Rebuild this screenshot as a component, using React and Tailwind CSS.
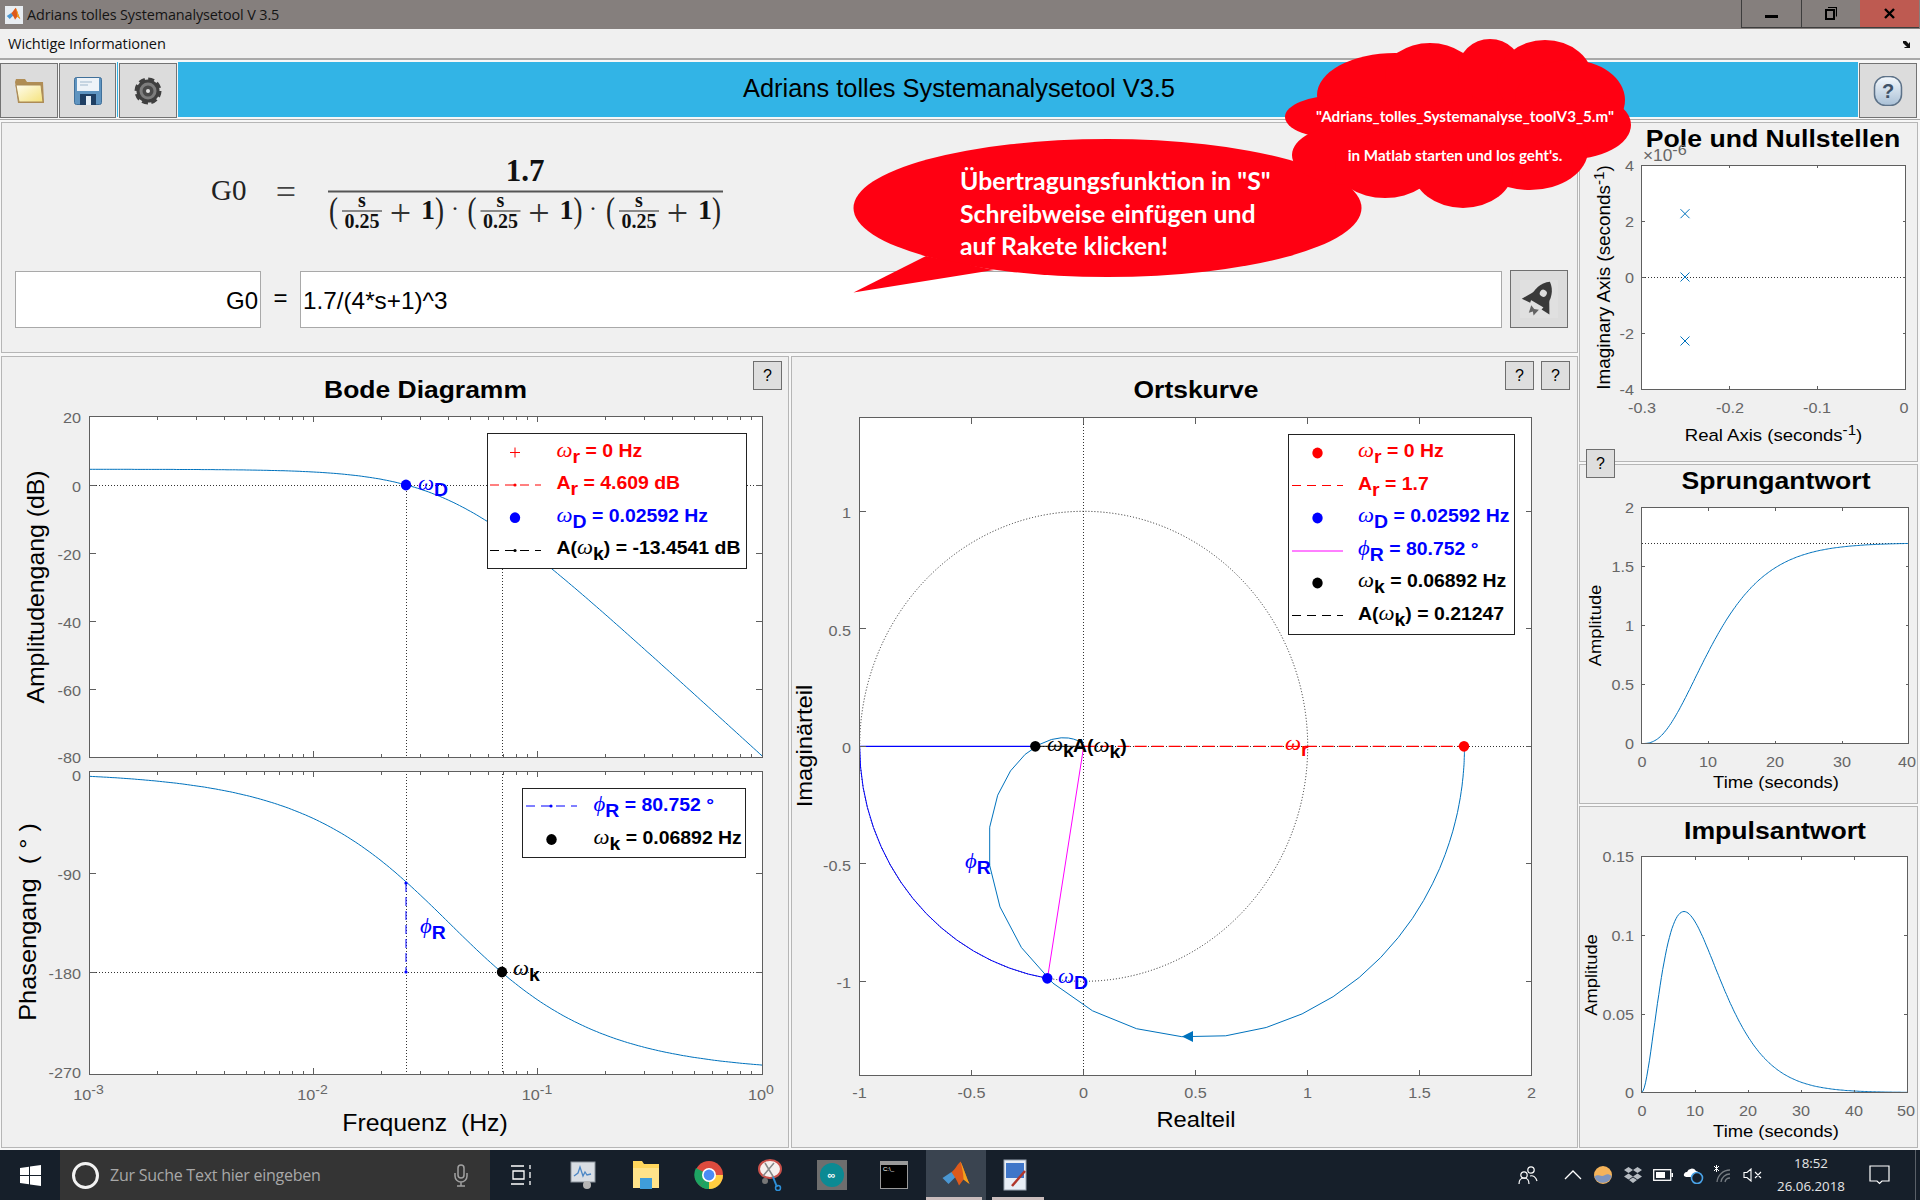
import React from 'react';

/* Adrians tolles Systemanalysetool - MATLAB GUI window on a Windows 10 desktop.
   The plots are SVGs whose viewBox equals their place on the page, so chart
   coordinates below are simply page pixels. */

const BLUE = '#0072bd';
const GREY = '#666666';
const FRAME = '#5f5f5f';

// system: G(s) = 1.7 / (4s + 1)^3
const magDb = (f) => 20 * Math.log10(1.7) - 30 * Math.log10(1 + (8 * Math.PI * f) ** 2);
const phaseDeg = (f) => (-3 * Math.atan(8 * Math.PI * f) * 180) / Math.PI;
const stepRes = (t) => 1.7 * (1 - Math.exp(-t / 4) * (1 + t / 4 + (t * t) / 32));
const impulseRes = (t) => (1.7 / 128) * t * t * Math.exp(-t / 4);

const logX = (f) => 762 + 224.1 * Math.log10(f);
const magY = (d) => 485 - d * 3.41;
const phaseY = (p) => 771.5 - p * 1.1155;
const nyX = (v) => 1083.7 + v * 224;
const nyY = (v) => 746.3 - v * 235;

const sample = (from, to, n, fx, fy) => {
  const pts = [];
  for (let i = 0; i <= n; i++) {
    const t = from + ((to - from) * i) / n;
    pts.push(`${fx(t).toFixed(1)},${fy(t).toFixed(1)}`);
  }
  return pts.join(' ');
};

const nyquistPoints = () => {
  const pts = [`${nyX(1.7)},${nyY(0)}`];
  for (let n = -46; n <= 34; n++) {
    const w = 0.562 * 1.137 ** n;
    const r = 1.7 / (1 + w * w) ** 1.5;
    const a = -3 * Math.atan(w);
    pts.push(`${nyX(r * Math.cos(a)).toFixed(1)},${nyY(r * Math.sin(a)).toFixed(1)}`);
  }
  return pts.join(' ');
};

const Txt = ({ x, y, size = 15, anchor = 'start', fill = '#000', bold, rot, sx = 1.08, children }) => (
  <text
    transform={`translate(${x} ${y})${rot ? ' rotate(-90)' : ''} scale(${sx} 1)`}
    fontSize={size}
    textAnchor={anchor}
    fill={fill}
    fontWeight={bold ? 700 : 400}
    className="font-['Liberation_Sans',sans-serif] whitespace-pre"
  >
    {children}
  </text>
);

const Greek = ({ size, children }) => (
  <tspan fontSize={size} fontWeight={400} fontStyle="italic" className="font-['Liberation_Serif',serif]">
    {children}
  </tspan>
);

// "A(w_k) = ..." style label: prefix, greek symbol, subscript, rest
const Label = ({ x, y, fill = '#000', pre, sym, sub, rest, size = 18 }) => (
  <Txt x={x} y={y} size={size} fill={fill} bold>
    {pre}
    {sym && <Greek size={size + 3}>{sym}</Greek>}
    <tspan dy="6">{sub}</tspan>
    <tspan dy="-6">{rest}</tspan>
  </Txt>
);

const Dot = ({ x, y, fill }) => <ellipse cx={x} cy={y} rx="5.2" ry="5.4" fill={fill} />;

const Dotted = ({ x1, y1, x2, y2 }) => (
  <line x1={x1} y1={y1} x2={x2} y2={y2} stroke="#333" strokeWidth="1" strokeDasharray="1 2" shapeRendering="crispEdges" />
);

const Plot = ({ l, r, t, b, xs = [], ys = [], minor = [], len = 6 }) => (
  <g stroke={FRAME} strokeWidth="1" shapeRendering="crispEdges" fill="none">
    <rect x={l} y={t} width={r - l} height={b - t} />
    {xs.map((x) => (
      <path key={x} d={`M${x} ${t}v${len}M${x} ${b}v${-len}`} />
    ))}
    {minor.map((x) => (
      <path key={x} d={`M${x} ${t}v3.5M${x} ${b}v-3.5`} />
    ))}
    {ys.map((y) => (
      <path key={y} d={`M${l} ${y}h${len}M${r} ${y}h${-len}`} />
    ))}
  </g>
);

const Face = ({ l, r, t, b }) => <rect x={l} y={t} width={r - l} height={b - t} fill="#fff" />;

const LegendBox = ({ x, y, w, h }) => (
  <rect x={x} y={y} width={w} height={h} fill="#fff" stroke="#222" strokeWidth="1" shapeRendering="crispEdges" />
);

const DashSym = ({ x, y, color, arrow }) => (
  <g>
    <line x1={x} y1={y} x2={x + 51} y2={y} stroke={color} strokeWidth="1" strokeDasharray="9 6" />
    {arrow && <circle cx={x + 25} cy={y} r="1.6" fill={color} />}
  </g>
);

const decades = [-3, -2, -1, 0].map((e) => logX(10 ** e));
const minors = [];
[-3, -2, -1].forEach((e) => {
  [2, 3, 4, 5, 6, 7, 8, 9].forEach((m) => minors.push(logX(m * 10 ** e)));
});

const BodePanel = () => (
  <svg width="786" height="790" viewBox="2 357 786 790" className="block">
    <Txt x={425.5} y={397.5} size={24.5} anchor="middle" bold>Bode Diagramm</Txt>

    <Face l={89.5} r={762} t={416} b={757} />
    <Dotted x1={89.5} y1={485} x2={762} y2={485} />
    <Dotted x1={406} y1={485} x2={406} y2={757} />
    <Dotted x1={502} y1={485} x2={502} y2={757} />
    <polyline points={sample(-3, 0, 240, (e) => logX(10 ** e), (e) => magY(magDb(10 ** e)))} fill="none" stroke={BLUE} strokeWidth="1" />
    <Plot l={89.5} r={762} t={416} b={757} xs={decades} minor={minors} ys={[485, 553, 621, 689]} />
    <Dot x={406} y={485} fill="#0000ff" />
    <Label x={418} y={490} fill="#0000ff" sym="ω" sub="D" />

    {[['20', 416], ['0', 485], ['-20', 553], ['-40', 621], ['-60', 689], ['-80', 756]].map(([v, y]) => (
      <Txt key={v} x={81} y={y + 7} anchor="end" fill={GREY}>{v}</Txt>
    ))}
    <Txt x={44} y={587} size={23} anchor="middle" rot>Amplitudengang (dB)</Txt>

    <LegendBox x={487} y={433.5} w={259} h={135} />
    <path d="M515 447.5v10M510 452.5h10" stroke="#ff0000" strokeWidth="1" />
    <Label x={556.5} y={456.5} fill="#ff0000" sym="ω" sub="r" rest=" = 0 Hz" />
    <DashSym x={490} y={485} color="#ff0000" arrow />
    <Label x={556.5} y={489} fill="#ff0000" pre="A" sub="r" rest=" = 4.609 dB" />
    <Dot x={515} y={517.7} fill="#0000ff" />
    <Label x={556.5} y={521.5} fill="#0000ff" sym="ω" sub="D" rest=" = 0.02592 Hz" />
    <DashSym x={490} y={550.5} color="#000" arrow />
    <Label x={556.5} y={554} pre="A(" sym="ω" sub="k" rest=") = -13.4541 dB" />

    <Face l={89.5} r={762} t={771} b={1074} />
    <Dotted x1={89.5} y1={972} x2={762} y2={972} />
    <Dotted x1={406} y1={771} x2={406} y2={1074} />
    <Dotted x1={502} y1={771} x2={502} y2={1074} />
    <polyline points={sample(-3, 0, 240, (e) => logX(10 ** e), (e) => phaseY(phaseDeg(10 ** e)))} fill="none" stroke={BLUE} strokeWidth="1" />
    <line x1={406} y1={883} x2={406} y2={972} stroke="#0000ff" strokeWidth="1" strokeDasharray="9 5" />
    <circle cx={406} cy={883} r="1.6" fill="#0000ff" />
    <circle cx={406} cy={972} r="1.6" fill="#0000ff" />
    <Plot l={89.5} r={762} t={771} b={1074} xs={decades} minor={minors} ys={[873, 972]} />
    <Dot x={502} y={972} fill="#000" />
    <Label x={513} y={975} sym="ω" sub="k" />
    <Label x={420} y={933} fill="#0000ff" sym="ϕ" sub="R" />

    {[['0', 774], ['-90', 873], ['-180', 972], ['-270', 1071]].map(([v, y]) => (
      <Txt key={v} x={81} y={y + 7} anchor="end" fill={GREY}>{v}</Txt>
    ))}
    {[['-3', 89.5], ['-2', 313.5], ['-1', 538], ['0', 762]].map(([e, x]) => (
      <Txt key={e} x={x - 1} y={1100} anchor="middle" fill={GREY}>
        10<tspan dy="-6" fontSize="13">{e}</tspan>
      </Txt>
    ))}
    <Txt x={36} y={922} size={23.5} anchor="middle" rot>Phasengang  ( ° )</Txt>
    <Txt x={425} y={1131} size={23} anchor="middle">Frequenz  (Hz)</Txt>

    <LegendBox x={522.5} y={788} w={223} h={69} />
    <DashSym x={526} y={806} color="#0000ff" arrow />
    <Label x={593.5} y={811} fill="#0000ff" sym="ϕ" sub="R" rest=" = 80.752 °" />
    <Dot x={551.5} y={839.5} fill="#000" />
    <Label x={593.5} y={844} sym="ω" sub="k" rest=" = 0.06892 Hz" />
  </svg>
);

const OrtsPanel = () => (
  <svg width="785" height="790" viewBox="792 357 785 790" className="block overflow-visible">
    <Txt x={1196} y={398} size={24.5} anchor="middle" bold>Ortskurve</Txt>
    <Face l={859.5} r={1531.5} t={417.5} b={1075.5} />

    <ellipse cx={1083.7} cy={746.3} rx="224" ry="235" fill="none" stroke="#222" strokeWidth="1" strokeDasharray="1 2" />
    <Dotted x1={1083.7} y1={417.5} x2={1083.7} y2={1075.5} />
    <Dotted x1={859.5} y1={746.3} x2={1531.5} y2={746.3} />

    <polyline points={nyquistPoints()} fill="none" stroke={BLUE} strokeWidth="1" />
    <polygon points="1182,1036.5 1193,1031 1193,1042" fill={BLUE} />

    <line x1={1083.7} y1={746.3} x2={1464} y2={746.3} stroke="#ff0000" strokeWidth="1.2" strokeDasharray="12 5" />
    <line x1={1035.3} y1={746.3} x2={1083.7} y2={746.3} stroke="#000" strokeWidth="1" />
    <line x1={859.7} y1={746.3} x2={1035.3} y2={746.3} stroke="#0000ff" strokeWidth="1.2" />
    <path d="M859.7 746.3A224 235 0 0 0 1047.5 978.3" fill="none" stroke="#0000ff" strokeWidth="1" />
    <line x1={1083.7} y1={746.3} x2={1047.5} y2={978.3} stroke="#ff00ff" strokeWidth="1" />

    <Plot l={859.5} r={1531.5} t={417.5} b={1075.5} xs={[971.5, 1083.5, 1195.5, 1307.5, 1419.5]} ys={[511.3, 628.8, 746.3, 863.8, 981.3]} />

    <Dot x={1464} y={746.3} fill="#ff0000" />
    <Dot x={1035.3} y={746.3} fill="#000" />
    <Dot x={1047.3} y={978.3} fill="#0000ff" />
    <Label x={1047} y={751} sym="ω" sub="k" />
    <Label x={1073} y={752} pre="A(" sym="ω" sub="k" rest=")" />
    <Label x={1285} y={750} fill="#ff0000" sym="ω" sub="r" />
    <Label x={965} y={868} fill="#0000ff" sym="ϕ" sub="R" />
    <Label x={1058} y={983} fill="#0000ff" sym="ω" sub="D" />

    {[['1', 511.3], ['0.5', 628.8], ['0', 746.3], ['-0.5', 863.8], ['-1', 981.3]].map(([v, y]) => (
      <Txt key={v} x={851} y={y + 7} anchor="end" fill={GREY}>{v}</Txt>
    ))}
    {[['-1', 859.5], ['-0.5', 971.5], ['0', 1083.5], ['0.5', 1195.5], ['1', 1307.5], ['1.5', 1419.5], ['2', 1531.5]].map(([v, x]) => (
      <Txt key={v} x={x} y={1098} anchor="middle" fill={GREY}>{v}</Txt>
    ))}
    <Txt x={1196} y={1127} size={22} anchor="middle">Realteil</Txt>
    <Txt x={812} y={746} size={22} anchor="middle" rot>Imaginärteil</Txt>

    <LegendBox x={1288.5} y={434.5} w={226} h={200} />
    <Dot x={1317.5} y={453} fill="#ff0000" />
    <Label x={1358} y={457} fill="#ff0000" sym="ω" sub="r" rest=" = 0 Hz" />
    <DashSym x={1292} y={485.5} color="#ff0000" />
    <Label x={1358} y={490} fill="#ff0000" pre="A" sub="r" rest=" = 1.7" />
    <Dot x={1317.5} y={518} fill="#0000ff" />
    <Label x={1358} y={522} fill="#0000ff" sym="ω" sub="D" rest=" = 0.02592 Hz" />
    <line x1={1292} y1={551} x2={1343} y2={551} stroke="#ff00ff" strokeWidth="1" />
    <Label x={1358} y={555} fill="#0000ff" sym="ϕ" sub="R" rest=" = 80.752 °" />
    <Dot x={1317.5} y={583} fill="#000" />
    <Label x={1358} y={587} sym="ω" sub="k" rest=" = 0.06892 Hz" />
    <DashSym x={1292} y={615.5} color="#000" />
    <Label x={1358} y={620} pre="A(" sym="ω" sub="k" rest=") = 0.21247" />
  </svg>
);

const PolePanel = () => (
  <svg width="337" height="338" viewBox="1580 123 337 338" className="block">
    <Txt x={1773} y={147} size={24.5} sx={1.087} anchor="middle" bold>Pole und Nullstellen</Txt>
    <Face l={1641.5} r={1905.5} t={165} b={389} />
    <Dotted x1={1641.5} y1={277} x2={1905.5} y2={277} />
    {[213.7, 277, 341].map((y) => (
      <path key={y} d={`M1680.5 ${y - 4.5}l9 9m0 -9l-9 9`} stroke={BLUE} strokeWidth="1" fill="none" />
    ))}
    <Plot l={1641.5} r={1905.5} t={165} b={389} xs={[1729.5, 1817.5]} ys={[221, 277, 333]} len={3} />
    <Txt x={1643} y={161} size={16} fill={GREY}>
      ×10<tspan dy="-6" fontSize="15">-6</tspan>
    </Txt>
    {[['4', 171], ['2', 227], ['0', 283], ['-2', 339], ['-4', 395]].map(([v, y]) => (
      <Txt key={v} x={1634} y={y} anchor="end" fill={GREY}>{v}</Txt>
    ))}
    {[['-0.3', 1642], ['-0.2', 1730], ['-0.1', 1817], ['0', 1904]].map(([v, x]) => (
      <Txt key={v} x={x} y={413} anchor="middle" fill={GREY}>{v}</Txt>
    ))}
    <Txt x={1773.5} y={441} size={17.2} anchor="middle">
      Real Axis (seconds<tspan dy="-6" fontSize="14">-1</tspan><tspan dy="6">)</tspan>
    </Txt>
    <Txt x={1610} y={277.5} size={17.5} anchor="middle" rot>
      Imaginary Axis (seconds<tspan dy="-6" fontSize="14">-1</tspan><tspan dy="6">)</tspan>
    </Txt>
  </svg>
);

const StepPanel = () => (
  <svg width="337" height="338" viewBox="1580 465 337 338" className="block">
    <Txt x={1776} y={489} size={24} sx={1.108} anchor="middle" bold>Sprungantwort</Txt>
    <Face l={1641.5} r={1908.5} t={507.5} b={743.5} />
    <Dotted x1={1641.5} y1={543} x2={1908.5} y2={543} />
    <polyline points={sample(0, 40, 200, (t) => 1641.5 + t * 6.675, (r) => 743.5 - stepRes(r) * 118)} fill="none" stroke={BLUE} strokeWidth="1" />
    <Plot l={1641.5} r={1908.5} t={507.5} b={743.5} xs={[1708, 1775, 1842]} ys={[566.5, 625.5, 684.5]} len={3} />
    {[['2', 513], ['1.5', 572], ['1', 631], ['0.5', 690], ['0', 749]].map(([v, y]) => (
      <Txt key={v} x={1634} y={y} anchor="end" fill={GREY}>{v}</Txt>
    ))}
    {[['0', 1642], ['10', 1708], ['20', 1775], ['30', 1842], ['40', 1907]].map(([v, x]) => (
      <Txt key={v} x={x} y={767} anchor="middle" fill={GREY}>{v}</Txt>
    ))}
    <Txt x={1776} y={788} size={17} anchor="middle">Time (seconds)</Txt>
    <Txt x={1601} y={625.5} size={17} anchor="middle" rot>Amplitude</Txt>
  </svg>
);

const ImpulsePanel = () => (
  <svg width="337" height="340" viewBox="1580 807 337 340" className="block overflow-visible">
    <Txt x={1775} y={839} size={24} sx={1.11} anchor="middle" bold>Impulsantwort</Txt>
    <Face l={1641.5} r={1907} t={856.5} b={1092.5} />
    <polyline points={sample(0, 50, 200, (t) => 1641.5 + t * 5.31, (r) => 1092.5 - impulseRes(r) * 1573)} fill="none" stroke={BLUE} strokeWidth="1" />
    <Plot l={1641.5} r={1907} t={856.5} b={1092.5} xs={[1695, 1748, 1801, 1854]} ys={[935, 1014]} len={3} />
    {[['0.15', 862], ['0.1', 941], ['0.05', 1020], ['0', 1098]].map(([v, y]) => (
      <Txt key={v} x={1634} y={y} anchor="end" fill={GREY}>{v}</Txt>
    ))}
    {[['0', 1642], ['10', 1695], ['20', 1748], ['30', 1801], ['40', 1854], ['50', 1906]].map(([v, x]) => (
      <Txt key={v} x={x} y={1116} anchor="middle" fill={GREY}>{v}</Txt>
    ))}
    <Txt x={1776} y={1137} size={17} anchor="middle">Time (seconds)</Txt>
    <Txt x={1597} y={975} size={17} anchor="middle" rot>Amplitude</Txt>
  </svg>
);

const EqTerm = ({ dx }) => (
  <g transform={`translate(${dx} 0)`} className="font-['Liberation_Serif',serif]">
    <text fontSize="36" fill="#222" transform="translate(329 222) scale(0.75 1)">(</text>
    <text x="362" y="207" fontSize="20" fontWeight="700" textAnchor="middle" fill="#111">s</text>
    <line x1="342" y1="211" x2="382" y2="211" stroke="#222" strokeWidth="1" />
    <text x="362" y="228" fontSize="20" fontWeight="700" textAnchor="middle" fill="#111">0.25</text>
    <text x="400.5" y="226" fontSize="38" textAnchor="middle" fill="#333">+</text>
    <text x="428" y="219" fontSize="28" fontWeight="700" textAnchor="middle" fill="#111">1</text>
    <text fontSize="36" fill="#222" transform="translate(435 222) scale(0.75 1)">)</text>
  </g>
);

const Equation = () => (
  <svg width="1000" height="148" viewBox="2 123 1000 148" className="block">
    <g className="font-['Liberation_Serif',serif]">
      <text x="211" y="200" fontSize="29" fill="#222">G0</text>
      <text x="286" y="204" fontSize="36" textAnchor="middle" fill="#444">=</text>
      <text x="525" y="181" fontSize="31" fontWeight="700" textAnchor="middle" fill="#111">1.7</text>
      <line x1="328" y1="191.5" x2="723" y2="191.5" stroke="#555" strokeWidth="2" />
      <text x="455" y="216" fontSize="24" textAnchor="middle" fill="#222">·</text>
      <text x="593" y="216" fontSize="24" textAnchor="middle" fill="#222">·</text>
    </g>
    <EqTerm dx={0} />
    <EqTerm dx={138.5} />
    <EqTerm dx={277} />
  </svg>
);

const RocketIcon = () => (
  <svg width="38" height="38" viewBox="-19 -19 38 38">
    <g transform="translate(1 0) rotate(30) scale(1.1)" fill="#3a3a3a">
      <path d="M0 -18C7 -13 9.5 -5 8 5L-8 5C-9.5 -5 -7 -13 0 -18Z" />
      <path d="M-8 -3L-14.5 8L-6 7.5ZM8 -3L14.5 8L6 7.5Z" />
      <circle cx="0" cy="-6" r="3.2" fill="#dcdcdc" />
      <path d="M-4 9L0 10.5L4 9L2.5 16L0 13L-2.5 16Z" opacity="0.75" />
    </g>
  </svg>
);

const FolderIcon = () => (
  <svg width="31" height="26" viewBox="0 0 31 26">
    <defs>
      <linearGradient id="folderFill" x1="0" y1="0" x2="1" y2="1">
        <stop offset="0" stopColor="#fffdf0" />
        <stop offset="1" stopColor="#f5e27a" />
      </linearGradient>
    </defs>
    <path d="M1 4l1 -3h9l2 3h16l1 21H4Z" fill="#b08d55" />
    <path d="M2 7h25l2 17H5Z" fill="url(#folderFill)" stroke="#a98a58" strokeWidth="1" />
  </svg>
);

const SaveIcon = () => (
  <svg width="28" height="28" viewBox="0 0 28 28">
    <rect x="0.5" y="0.5" width="27" height="27" rx="2" fill="#5f94c0" stroke="#40709a" />
    <rect x="3" y="1" width="22" height="13" fill="#eef3f8" />
    <path d="M6 5h12M6 8h8" stroke="#9fb7cc" strokeWidth="1" />
    <rect x="6" y="17" width="16" height="11" fill="#1f3f63" />
    <rect x="12" y="19" width="5" height="9" fill="#e6eef5" />
  </svg>
);

const GearIcon = () => (
  <svg width="28" height="28" viewBox="0 0 28 28">
    <circle cx="14" cy="14" r="11.5" fill="#3f3f3f" />
    <circle cx="14" cy="14" r="12" fill="none" stroke="#3f3f3f" strokeWidth="3" strokeDasharray="6 3.4" />
    <circle cx="14" cy="14" r="8.5" fill="#7d7d7d" />
    <circle cx="14" cy="14" r="5.5" fill="#4a4a4a" />
    <circle cx="14" cy="14" r="2" fill="#e5e5e5" />
  </svg>
);

const HelpIcon = () => (
  <svg width="30" height="30" viewBox="0 0 30 30">
    <defs>
      <linearGradient id="helpFill" x1="0" y1="0" x2="0" y2="1">
        <stop offset="0" stopColor="#f4f8fc" />
        <stop offset="1" stopColor="#a9c0d6" />
      </linearGradient>
    </defs>
    <rect x="1.5" y="0.5" width="27" height="29" rx="11" fill="url(#helpFill)" stroke="#5d7288" strokeWidth="1.5" />
    <text x="15" y="22" fontSize="20" fontWeight="700" textAnchor="middle" fill="#3f5268" className="font-['Liberation_Sans',sans-serif]">?</text>
  </svg>
);

const MatlabLogo = ({ size = 18 }) => (
  <svg width={size} height={size} viewBox="0 0 20 20">
    <path d="M1 12L7 8L10 11L5 16Z" fill="#4a97d2" />
    <path d="M7 8C9 7 10 4 13 1C15 5 17 12 19 16L15 13L12 17C11 14 9 11 7 8Z" fill="#dd5a1b" />
    <path d="M13 1C15 5 17 12 19 16L15 13C15 9 14 5 13 1Z" fill="#f0a21e" />
  </svg>
);

const ToolButton = ({ className = '', children }) => (
  <div className={`h-[55px] mt-[1px] bg-[#dcdcdc] border border-[#737373] flex items-center justify-center ${className}`}>
    {children}
  </div>
);

const SmallHelp = ({ className = '' }) => (
  <div className={`absolute w-[29px] h-[29px] bg-[#dedede] border border-[#6e6e6e] flex items-center justify-center text-[16px] text-black ${className}`}>
    ?
  </div>
);

const TitleBar = () => (
  <div className="h-[29px] bg-[#857f7d] flex items-start">
    <div className="w-[27px] h-[28px] flex items-center justify-center">
      <div className="w-[18px] h-[18px] bg-[#e8edf2] flex items-center justify-center mt-[1px]">
        <MatlabLogo size={15} />
      </div>
    </div>
    <div className="text-[14.4px] leading-[29px] text-[#141414] font-['Open_Sans',sans-serif] tracking-[-0.1px]">
      Adrians tolles Systemanalysetool V 3.5
    </div>
    <div className="ml-auto flex h-[28px] mr-[1px]">
      <div className="w-[60px] border-l border-b border-[#3d3d3d] flex items-center justify-center">
        <div className="w-[13px] h-[3px] bg-black mt-[5px]" />
      </div>
      <div className="w-[59px] border-l border-b border-[#3d3d3d] flex items-center justify-center">
        <svg width="12" height="13" viewBox="0 0 12 13">
          <path d="M3 0.5h8.5v9" fill="none" stroke="#000" strokeWidth="1.2" />
          <rect x="1" y="3" width="8" height="9" fill="none" stroke="#000" strokeWidth="2" />
        </svg>
      </div>
      <div className="w-[59px] bg-[#be5a51] border-b border-[#3d3d3d] flex items-center justify-center">
        <svg width="11" height="11" viewBox="0 0 11 11">
          <path d="M1 1L10 10M10 1L1 10" stroke="#000" strokeWidth="2.4" />
        </svg>
      </div>
    </div>
  </div>
);

const MenuBar = () => (
  <div className="h-[31px] bg-[#f0f0f0] border-b-2 border-[#a9a9a9] flex items-center px-[8px]">
    <span className="text-[14.6px] text-[#111] font-['Open_Sans',sans-serif] tracking-[-0.1px]">Wichtige Informationen</span>
    <svg className="ml-auto mr-[1px] mt-[1px]" width="9" height="9" viewBox="0 0 9 9">
      <path d="M1 1h3l3 3V2l1 1v5H3L2 7h3L1 3Z" fill="#111" />
    </svg>
  </div>
);

const Toolbar = () => (
  <div className="h-[60px] bg-[#f7f7f7] border-b border-[#a9a9a9] flex items-start pt-[2px]">
    <ToolButton className="w-[58px]"><FolderIcon /></ToolButton>
    <ToolButton className="w-[57px] ml-[1px]"><SaveIcon /></ToolButton>
    <div className="w-[1px] h-[55px] ml-[1px] bg-[#32b4e6]" />
    <ToolButton className="w-[58px] ml-[1px]"><GearIcon /></ToolButton>
    <div className="w-[1680px] ml-[1px] h-[55px] bg-[#32b4e6] flex items-center justify-center pr-[118px] pb-[2px] text-[25.4px] text-black">
      Adrians tolles Systemanalysetool V3.5
    </div>
    <ToolButton className="w-[58px] ml-[1px]"><HelpIcon /></ToolButton>
  </div>
);

const EquationPanel = () => (
  <div className="h-[231px] bg-[#f0f0f0] border border-[#b6b6b6]">
    <Equation />
    <div className="flex h-[57px] pl-[13px]">
      <div className="w-[246px] bg-white border border-[#a9a9a9] flex items-center justify-end pr-[2px] pt-[3px] text-[24px] text-black">G0</div>
      <div className="w-[39px] flex items-center justify-center pb-[4px] text-[24px] text-black">=</div>
      <div className="w-[1202px] bg-white border border-[#a9a9a9] flex items-center pl-[2px] pt-[3px] text-[24.3px] text-black">1.7/(4*s+1)^3</div>
      <div className="w-[58px] ml-[8px] -mt-[1px] bg-[#dcdcdc] border border-[#6f6f6f] flex items-center justify-center">
        <div className="w-[38px] h-[38px] bg-[#e0e0e0]"><RocketIcon /></div>
      </div>
    </div>
  </div>
);

const Bubbles = () => (
  <>
    <svg className="absolute inset-0 pointer-events-none" width="1920" height="1200" viewBox="0 0 1920 1200">
      <g fill="#ff0012">
        <ellipse cx="1107.5" cy="208" rx="254" ry="69" />
        <polygon points="853.5,292.5 926,256 994,270" />
        <ellipse cx="1460" cy="120" rx="150" ry="60" />
        <ellipse cx="1395" cy="95" rx="78" ry="42" />
        <ellipse cx="1430" cy="75" rx="45" ry="32" />
        <ellipse cx="1490" cy="70" rx="32" ry="31" />
        <ellipse cx="1545" cy="80" rx="48" ry="40" />
        <ellipse cx="1570" cy="100" rx="55" ry="40" />
        <ellipse cx="1565" cy="125" rx="66" ry="35" />
        <ellipse cx="1340" cy="117" rx="55" ry="22" />
        <ellipse cx="1350" cy="155" rx="58" ry="30" />
        <ellipse cx="1530" cy="150" rx="58" ry="40" />
        <ellipse cx="1463" cy="170" rx="50" ry="38" />
        <ellipse cx="1385" cy="165" rx="50" ry="33" />
      </g>
    </svg>
    <div className="absolute left-[960px] top-[165px] text-[24.8px] leading-[32.5px] font-bold text-white font-['Lato',sans-serif] whitespace-nowrap">
      <div>Übertragungsfunktion in "S"</div>
      <div>Schreibweise einfügen und</div>
      <div>auf Rakete klicken!</div>
    </div>
    <div className="absolute left-[1285px] top-[97px] w-[360px] text-center text-[15.2px] leading-[39px] font-bold text-white font-['Lato',sans-serif] whitespace-nowrap">
      <div>"Adrians_tolles_Systemanalyse_toolV3_5.m"</div>
      <div className="pr-[20px]">in Matlab starten und los geht's.</div>
    </div>
  </>
);

const Slot = ({ w, className = '', children }) => (
  <div style={{ width: w }} className={`h-full shrink-0 flex items-center justify-center ${className}`}>
    {children}
  </div>
);

const Taskbar = () => (
  <div className="h-[50px] bg-[#161f2a] flex items-stretch">
    <Slot w={60}>
      <svg width="21" height="21" viewBox="0 0 21 21">
        <path d="M0 3L9 1.7V10H0ZM10 1.5L21 0V10H10ZM0 11H9V19.3L0 18ZM10 11H21V21L10 19.5Z" fill="#fff" />
      </svg>
    </Slot>
    <div className="w-[430px] bg-[#343434] flex items-center relative">
      <div className="ml-[12px] w-[27px] h-[27px] rounded-full border-[3px] border-[#f2f2f2]" />
      <span className="ml-[11px] text-[16px] text-[#a8a8a8] font-['Open_Sans',sans-serif] tracking-[-0.25px]">Zur Suche Text hier eingeben</span>
      <svg className="absolute left-[394px] top-[14px]" width="14" height="24" viewBox="0 0 14 24" fill="none" stroke="#a0a0a0" strokeWidth="1.5">
        <rect x="4" y="1" width="6" height="13" rx="3" />
        <path d="M1 9v3a6 6 0 0 0 12 0V9M7 18v4M3 22h8" />
      </svg>
    </div>
    <Slot w={61}>
      <svg width="20" height="22" viewBox="0 0 20 22" fill="none" stroke="#fff" strokeWidth="1.3">
        <path d="M0 2h13M0 20h13M2 7h11v8H2ZM19 1v4M19 8v6M19 17v4" />
      </svg>
    </Slot>
    <Slot w={63}>
      <svg width="30" height="30" viewBox="0 0 30 30">
        <rect x="3" y="2" width="24" height="20" fill="#d9dee4" stroke="#8b949c" />
        <path d="M6 16l4-3 2-6 3 9 2-4 2 3 4-1" fill="none" stroke="#4b86c5" strokeWidth="1.3" />
        <circle cx="19" cy="25" r="4" fill="#b5b5b5" />
      </svg>
    </Slot>
    <Slot w={64}>
      <svg width="30" height="30" viewBox="0 0 30 30">
        <path d="M2 1h9l2 3h15v24H2Z" fill="#ffd65c" />
        <path d="M2 8h26v20H2Z" fill="#ffe38a" />
        <rect x="9" y="18" width="12" height="11" fill="#3f9ddb" />
      </svg>
    </Slot>
    <Slot w={61}>
      <svg width="30" height="30" viewBox="0 0 30 30">
        <circle cx="15" cy="15" r="14" fill="#dd4b3e" />
        <path d="M15 15L27 22A14 14 0 0 1 6 26Z" fill="#1da462" />
        <path d="M15 15L6 26A14 14 0 0 1 2 8Z" fill="#1da462" />
        <path d="M15 15H29A14 14 0 0 1 15 29Z" fill="#ffcd40" />
        <circle cx="15" cy="15" r="7" fill="#fff" />
        <circle cx="15" cy="15" r="5.4" fill="#4b8bf5" />
      </svg>
    </Slot>
    <Slot w={62}>
      <svg width="30" height="32" viewBox="0 0 30 32" fill="none">
        <ellipse cx="15" cy="10" rx="11" ry="9" fill="#f6f0ee" stroke="#c9504a" strokeWidth="2" />
        <path d="M10 4L19 19M19 4L8 17" stroke="#888" strokeWidth="1.5" />
        <circle cx="10" cy="22" r="3" fill="#777" />
        <path d="M18 18L22 28" stroke="#2d8fd8" strokeWidth="2" />
        <circle cx="23" cy="29" r="2.5" stroke="#2d8fd8" strokeWidth="1.5" />
      </svg>
    </Slot>
    <Slot w={61}>
      <div className="w-[30px] h-[30px] bg-[#6e6e6e] flex items-center justify-center">
        <div className="w-[24px] h-[24px] rounded-full bg-[#0b8a93] flex items-center justify-center text-[11px] font-bold text-white">∞</div>
      </div>
    </Slot>
    <Slot w={64}>
      <div className="w-[28px] h-[28px] bg-black border border-[#9a9a9a] border-t-[4px] text-[6px] leading-[8px] text-white pl-[2px]">
        C:\_
      </div>
    </Slot>
    <Slot w={60} className="bg-[#3a4450] relative">
      <MatlabLogo size={30} />
      <div className="absolute left-0 bottom-0 w-[56px] h-[3px] bg-[#c9bcbc]" />
    </Slot>
    <Slot w={58} className="relative">
      <svg width="24" height="32" viewBox="0 0 24 32">
        <rect x="1" y="1" width="22" height="30" fill="#e8eef6" stroke="#98a3b0" />
        <rect x="3" y="4" width="18" height="15" fill="#3f76c9" />
        <path d="M22 12L9 27" stroke="#b1362b" strokeWidth="2.5" />
      </svg>
      <div className="absolute left-[6px] bottom-0 w-[52px] h-[3px] bg-[#c9bcbc]" />
    </Slot>

    <div className="ml-auto flex items-stretch">
      <Slot w={36}>
        <svg width="20" height="20" viewBox="0 0 20 20" fill="none" stroke="#fff" strokeWidth="1.2">
          <circle cx="13" cy="5" r="3.2" />
          <circle cx="6" cy="10" r="3.2" />
          <path d="M1 19c0-4 2-6 5-6s5 2 5 6M12 11c3-1 6 1 7 5" />
        </svg>
      </Slot>
      <Slot w={30} className="ml-[12px]">
        <svg width="18" height="10" viewBox="0 0 18 10" fill="none" stroke="#fff" strokeWidth="1.3">
          <path d="M1 9L9 1L17 9" />
        </svg>
      </Slot>
      <Slot w={30}>
        <svg width="18" height="18" viewBox="0 0 18 18">
          <circle cx="9" cy="9" r="9" fill="#f4b35a" />
          <path d="M0.5 11C4 7 7 12 11 9C13 8 15 8 17.6 10A9 9 0 0 1 0.5 11Z" fill="#7f95bd" />
        </svg>
      </Slot>
      <Slot w={30}>
        <svg width="18" height="16" viewBox="0 0 18 16" fill="#b6bcc2">
          <path d="M4.5 0L9 3L4.5 6L0 3ZM13.5 0L18 3L13.5 6L9 3ZM4.5 6.5L9 9.5L4.5 12.5L0 9.5ZM13.5 6.5L18 9.5L13.5 12.5L9 9.5ZM9 10.5L13 13L9 16L5 13Z" />
        </svg>
      </Slot>
      <Slot w={30}>
        <svg width="20" height="12" viewBox="0 0 20 12">
          <rect x="0.7" y="0.7" width="17" height="10.6" fill="none" stroke="#fff" strokeWidth="1.3" />
          <rect x="3" y="3" width="9" height="6" fill="#fff" />
          <rect x="18.5" y="4" width="1.5" height="4" fill="#fff" />
        </svg>
      </Slot>
      <Slot w={30}>
        <svg width="22" height="18" viewBox="0 0 22 18">
          <path d="M2 10a3 3 0 0 1 3-4a5 5 0 0 1 9-1a4 4 0 0 1 3 6H4Z" fill="#fff" />
          <circle cx="15" cy="12" r="5.5" fill="#161f2a" stroke="#4aa3e8" strokeWidth="1.6" />
        </svg>
      </Slot>
      <Slot w={30}>
        <svg width="20" height="20" viewBox="0 0 20 20" fill="none" stroke="#777d83" strokeWidth="1.3">
          <path d="M4 17A13 13 0 0 1 17 5M8 17A9 9 0 0 1 17 9M12 17A5 5 0 0 1 17 13" />
          <path d="M1 1L6 6M6 1L1 6M3.5 0V7" stroke="#fff" strokeWidth="1" />
        </svg>
      </Slot>
      <Slot w={29}>
        <svg width="20" height="14" viewBox="0 0 20 14" fill="none" stroke="#fff" strokeWidth="1.1">
          <path d="M1 4.5H4L8 1V13L4 9.5H1ZM12 4L18 10M18 4L12 10" />
        </svg>
      </Slot>
      <div className="w-[88px] flex flex-col items-center justify-center text-[13.3px] leading-[23px] text-[#e6e6e6] font-['Open_Sans',sans-serif]">
        <span>18:52</span>
        <span>26.06.2018</span>
      </div>
      <Slot w={48}>
        <svg width="21" height="20" viewBox="0 0 21 20" fill="none" stroke="#fff" strokeWidth="1.2">
          <path d="M1 1H20V16H13L10.5 18.5L8 16H1Z" />
        </svg>
      </Slot>
      <div className="w-[12px]" />
      <div className="w-[1px] bg-[#5a6068]" />
      <div className="w-[4px]" />
    </div>
  </div>
);

export default function App() {
  return (
    <div className="relative w-[1920px] h-[1200px] overflow-hidden bg-[#f7f7f7] font-['Liberation_Sans',sans-serif] flex flex-col">
      <TitleBar />
      <MenuBar />
      <Toolbar />

      <div className="h-[1030px] pt-[2px] flex">
        <div className="w-[1578px] flex flex-col pl-[1px]">
          <EquationPanel />
          <div className="h-[792px] mt-[3px] flex">
            <div className="relative w-[788px] bg-[#f0f0f0] border border-[#b6b6b6]">
              <BodePanel />
              <SmallHelp className="left-[751px] top-[4px]" />
            </div>
            <div className="relative ml-[2px] w-[787px] bg-[#f0f0f0] border border-[#b6b6b6]">
              <OrtsPanel />
              <SmallHelp className="left-[713px] top-[4px]" />
              <SmallHelp className="left-[749px] top-[4px]" />
            </div>
          </div>
        </div>

        <div className="relative ml-[1px] w-[339px] flex flex-col">
          <div className="h-[340px] bg-[#f0f0f0] border border-[#b6b6b6]"><PolePanel /></div>
          <div className="h-[340px] mt-[2px] bg-[#f0f0f0] border border-[#b6b6b6]"><StepPanel /></div>
          <div className="h-[342px] mt-[2px] bg-[#f0f0f0] border border-[#b6b6b6]"><ImpulsePanel /></div>
          <SmallHelp className="left-[7px] top-[327px]" />
        </div>
      </div>

      <Taskbar />
      <Bubbles />
    </div>
  );
}
